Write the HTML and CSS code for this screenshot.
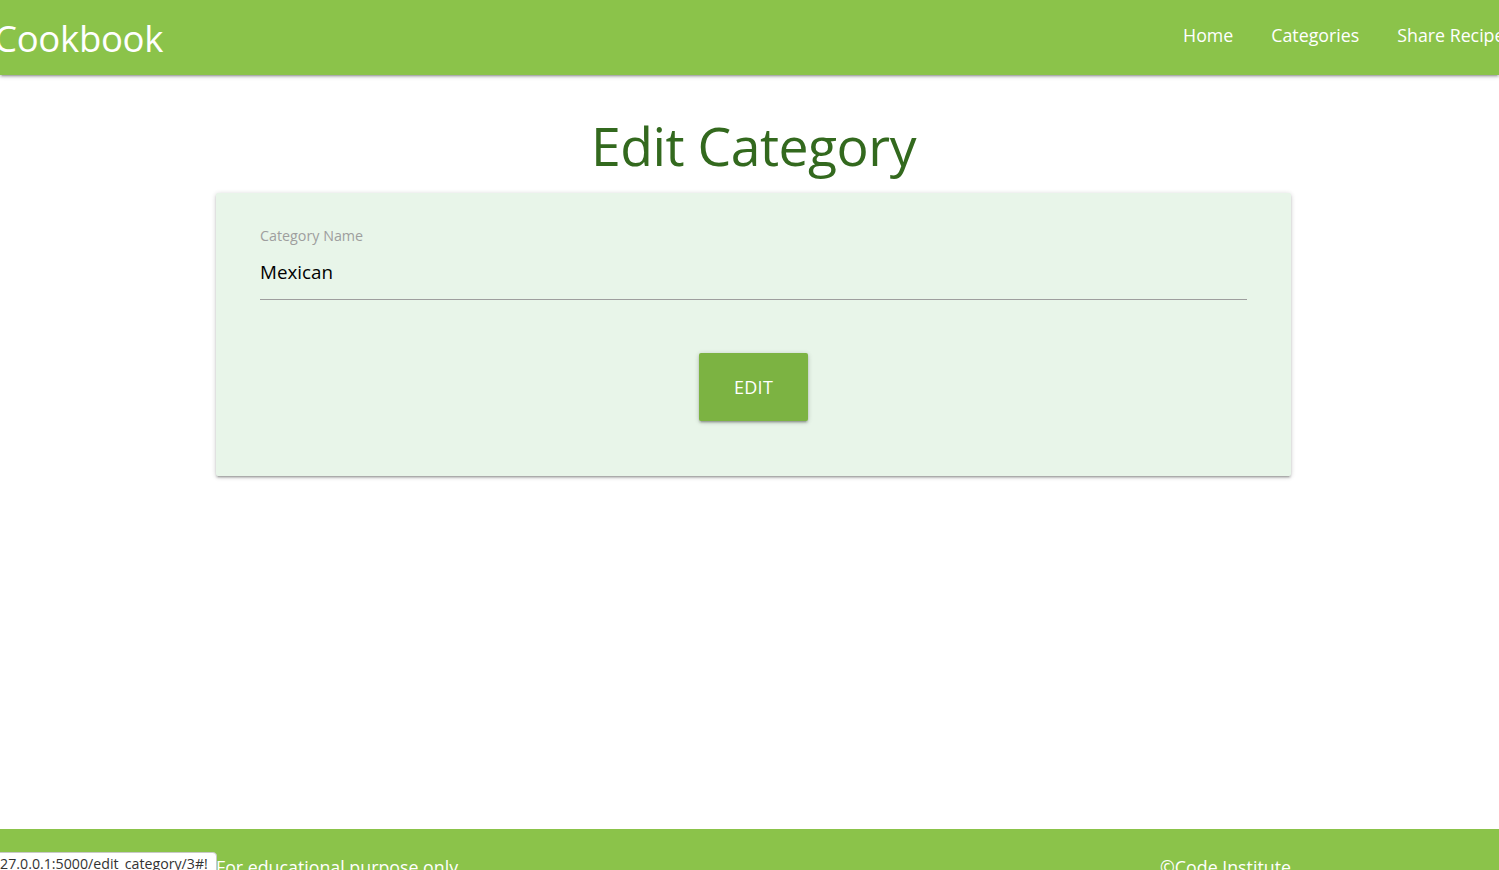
FILE: index.html
```html
<!DOCTYPE html>
<html lang="en">
<head>
<meta charset="utf-8">
<title>Cookbook - Edit Category</title>
<link rel="stylesheet" href="styles.css">
</head>
<body>
<nav class="nav">
  <a class="brand" href="#">Cookbook</a>
  <ul class="links">
    <li><a href="#">Home</a></li>
    <li><a href="#">Categories</a></li>
    <li><a href="#">Share Recipe</a></li>
  </ul>
</nav>
<main class="main">
  <h3 class="title">Edit Category</h3>
  <form class="card">
    <div class="field">
      <label class="label" for="category_name">Category Name</label>
      <input class="input" id="category_name" type="text" value="Mexican">
    </div>
    <div class="actions">
      <button class="btn" type="button">EDIT</button>
    </div>
  </form>
</main>
<footer class="footer">
  <div class="footer-inner">
    <span>For educational purpose only</span>
    <span>©Code Institute</span>
  </div>
</footer>
<div class="status">127.0.0.1:5000/edit_category/3#!</div>
</body>
</html>
```

FILE: styles.css
```css
html, body {
  margin: 0;
  padding: 0;
  height: 100%;
}
body {
  font-family: "Open Sans", "Noto Sans", sans-serif;
  background: #ffffff;
  overflow: hidden;
  display: flex;
  flex-direction: column;
  position: relative;
}
.nav {
  height: 75px;
  background: #8bc34a;
  display: flex;
  align-items: center;
  justify-content: space-between;
  box-shadow: 0 2px 2px 0 rgba(0,0,0,0.14), 0 3px 1px -2px rgba(0,0,0,0.12), 0 1px 5px 0 rgba(0,0,0,0.2);
  flex-shrink: 0;
  position: relative;
  z-index: 2;
}
.brand {
  color: #ffffff;
  text-decoration: none;
  font-size: 36.5px;
  margin-left: -6px;
  line-height: 72px;
  letter-spacing: -0.3px;
}
.links {
  list-style: none;
  margin: 0 -24.5px 0 0;
  padding: 0;
  display: flex;
  height: 75px;
  align-items: center;
}
.links a {
  color: #ffffff;
  text-decoration: none;
  font-size: 17.8px;
  padding: 0 19px;
  line-height: 66px;
  display: block;
  margin-top: -6px;
}
.main {
  flex: 1;
  display: flex;
  flex-direction: column;
  align-items: center;
  padding-left: 8px;
}
.title {
  margin: 24px 0 0;
  font-size: 53.5px;
  font-weight: 400;
  line-height: 94px;
  color: #33691e;
  letter-spacing: -0.5px;
}
.card {
  width: 1075px;
  box-sizing: border-box;
  background: #e8f5e9;
  padding: 36px 44px 55px;
  box-shadow: 0 2px 2px 0 rgba(0,0,0,0.14), 0 3px 1px -2px rgba(0,0,0,0.12), 0 1px 5px 0 rgba(0,0,0,0.2);
  border-radius: 2px;
}
.field {
  display: flex;
  flex-direction: column;
}
.label {
  font-size: 14.3px;
  color: #9e9e9e;
  line-height: 14px;
}
.input {
  font-family: inherit;
  font-size: 18.8px;
  color: #000000;
  background: transparent;
  border: none;
  border-bottom: 1px solid #9e9e9e;
  padding: 0 0 10px;
  margin-top: 12px;
  box-sizing: border-box;
  height: 45px;
  outline: none;
}
.actions {
  display: flex;
  justify-content: center;
  margin-top: 53px;
}
.btn {
  width: 109px;
  height: 68px;
  background: #7cb342;
  color: #ffffff;
  border: none;
  border-radius: 2px;
  font-family: inherit;
  font-size: 18px;
  letter-spacing: 0.3px;
  box-shadow: 0 2px 2px 0 rgba(0,0,0,0.14), 0 3px 1px -2px rgba(0,0,0,0.12), 0 1px 5px 0 rgba(0,0,0,0.2);
}
.footer {
  height: 41px;
  background: #8bc34a;
  flex-shrink: 0;
  display: flex;
  justify-content: center;
  padding-left: 8px;
}
.footer-inner {
  width: 1075px;
  display: flex;
  justify-content: space-between;
  color: #ffffff;
  font-size: 17.8px;
  padding-top: 26px;
  line-height: 24px;
}
.status {
  position: absolute;
  left: -17px;
  bottom: -4px;
  background: #ffffff;
  border: 1px solid #c8c8c8;
  border-radius: 0 4px 0 0;
  padding: 1px 8px 0 8px;
  font-size: 14.2px;
  line-height: 19px;
  color: #333333;
  font-family: "Open Sans", "Noto Sans", sans-serif;
}
```
